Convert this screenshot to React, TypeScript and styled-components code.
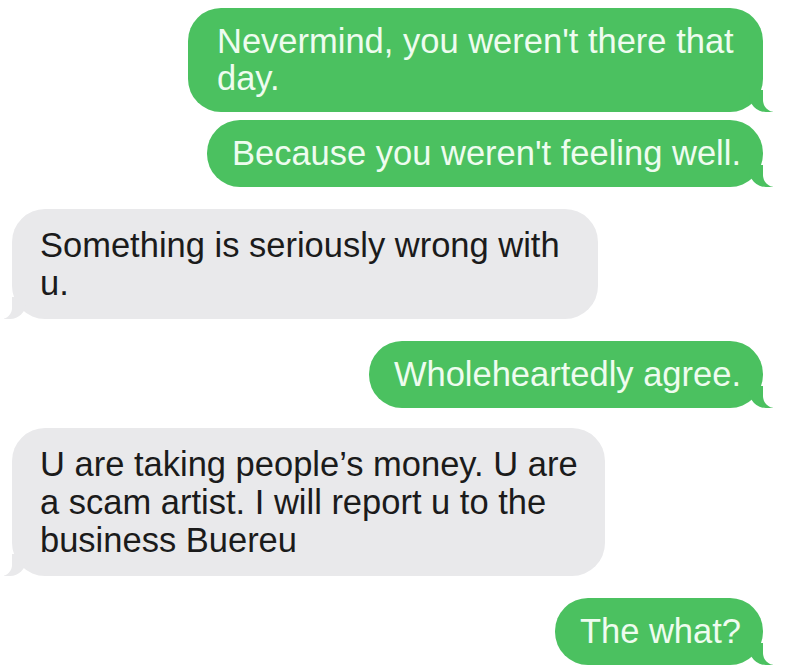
import React from "react";
import styled, { createGlobalStyle, css } from "styled-components";

const Global = createGlobalStyle`
  html, body { margin: 0; padding: 0; background: #ffffff; }
  body { font-family: "Liberation Sans", Arial, sans-serif; }
`;

const Thread = styled.div`
  display: flex;
  flex-direction: column;
  padding: 8px 37px 0 12px;
  width: 800px;
  height: 672px;
  box-sizing: border-box;
  overflow: hidden;
`;

const Row = styled.div<{ $out: boolean; $gap: number }>`
  display: flex;
  justify-content: ${(p) => (p.$out ? "flex-end" : "flex-start")};
  margin-top: ${(p) => p.$gap}px;
`;

const GREEN = "#4bc160";
const GRAY = "#e9e9eb";

const Bubble = styled.div<{ $out: boolean; $w?: number }>`
  position: relative;
  box-sizing: border-box;
  font-size: 34.5px;
  border-radius: 33px;
  ${(p) => (p.$w ? css`width: ${p.$w}px;` : css`white-space: nowrap;`)}
  ${(p) =>
    p.$out
      ? css`
          background: ${GREEN};
          color: #eefcef;
          line-height: 37px;
          padding: 15px 22px 15px ${p.$w ? 29 : 25}px;
          &::before {
            content: "";
            position: absolute;
            bottom: 0;
            right: -10px;
            width: 24px;
            height: 22px;
            background: ${GREEN};
            border-bottom-left-radius: 17px;
          }
          &::after {
            content: "";
            position: absolute;
            bottom: 0;
            right: -13px;
            width: 13px;
            height: 24px;
            background: #ffffff;
            border-bottom-left-radius: 12px;
          }
        `
      : css`
          background: ${GRAY};
          color: #1b1b1b;
          line-height: 38px;
          padding: 17px 18px 17px 28px;
          &::before {
            content: "";
            position: absolute;
            bottom: 0;
            left: -8px;
            width: 22px;
            height: 22px;
            background: ${GRAY};
            border-bottom-right-radius: 16px;
          }
          &::after {
            content: "";
            position: absolute;
            bottom: 0;
            left: -12px;
            width: 12px;
            height: 24px;
            background: #ffffff;
            border-bottom-right-radius: 11px;
          }
        `}
`;

const Text = styled.span`
  position: relative;
  z-index: 1;
`;

type Msg = { out: boolean; text: string; w?: number; gap: number };

const messages: Msg[] = [
  { out: true, text: "Nevermind, you weren't there that day.", w: 575, gap: 0 },
  { out: true, text: "Because you weren't feeling well.", gap: 8 },
  { out: false, text: "Something is seriously wrong with u.", w: 586, gap: 22 },
  { out: true, text: "Wholeheartedly agree.", gap: 22 },
  {
    out: false,
    text: "U are taking people\u2019s money. U are a scam artist. I will report u to the business Buereu",
    w: 593,
    gap: 20,
  },
  { out: true, text: "The what?", gap: 22 },
];

export default function App() {
  return (
    <>
      <Global />
      <Thread>
        {messages.map((m, i) => (
          <Row key={i} $out={m.out} $gap={m.gap}>
            <Bubble $out={m.out} $w={m.w}>
              <Text>{m.text}</Text>
            </Bubble>
          </Row>
        ))}
      </Thread>
    </>
  );
}
